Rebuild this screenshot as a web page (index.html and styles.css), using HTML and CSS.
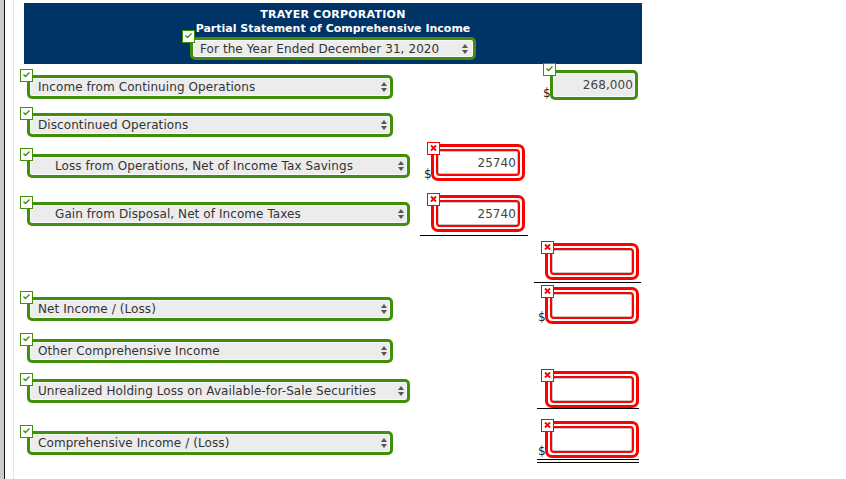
FILE: index.html
```html
<!DOCTYPE html>
<html>
<head>
<meta charset="utf-8">
<link rel="stylesheet" href="styles.css">
</head>
<body>
<div class="page">
  <div class="gutter"></div>
  <div class="main">
    <div class="rule">
      <div class="head">
        <div class="title">TRAYER CORPORATION</div>
        <div class="title">Partial Statement of Comprehensive Income</div>
        <div class="sel sel-head">
          <span class="ok"><svg viewBox="0 0 13 13"><path d="M3.5 5.5L5.5 7.5L9.5 3.5" fill="none" stroke="#3f8f0a" stroke-width="1.4"/></svg></span>
          <span class="txt">For the Year Ended December 31, 2020</span>
          <svg class="arr" viewBox="0 0 6 10"><path d="M0 4L3 0L6 4Z M0 6L3 10L6 6Z" fill="#555"/></svg>
        </div>
      </div>

      <div class="row ra">
        <div class="lab pt11">
          <div class="sel sel-n">
            <span class="ok"><svg viewBox="0 0 13 13"><path d="M3.5 5.5L5.5 7.5L9.5 3.5" fill="none" stroke="#3f8f0a" stroke-width="1.4"/></svg></span>
            <span class="txt">Income from Continuing Operations</span>
            <svg class="arr" viewBox="0 0 6 10"><path d="M0 4L3 0L6 4Z M0 6L3 10L6 6Z" fill="#555"/></svg>
          </div>
        </div>
        <div class="cell"></div>
        <div class="cell pt6 shift">
          <div class="grp">
            <span class="dollar">$</span>
            <div class="inp-g">
              <span class="ok"><svg viewBox="0 0 13 13"><path d="M3.5 5.5L5.5 7.5L9.5 3.5" fill="none" stroke="#3f8f0a" stroke-width="1.4"/></svg></span>
              268,000
            </div>
          </div>
        </div>
      </div>

      <div class="row rb">
        <div class="lab pt9">
          <div class="sel sel-n">
            <span class="ok"><svg viewBox="0 0 13 13"><path d="M3.5 5.5L5.5 7.5L9.5 3.5" fill="none" stroke="#3f8f0a" stroke-width="1.4"/></svg></span>
            <span class="txt">Discontinued Operations</span>
            <svg class="arr" viewBox="0 0 6 10"><path d="M0 4L3 0L6 4Z M0 6L3 10L6 6Z" fill="#555"/></svg>
          </div>
        </div>
        <div class="cell"></div>
        <div class="cell"></div>
      </div>

      <div class="row rc">
        <div class="lab pt14">
          <div class="sel sel-w indent">
            <span class="ok"><svg viewBox="0 0 13 13"><path d="M3.5 5.5L5.5 7.5L9.5 3.5" fill="none" stroke="#3f8f0a" stroke-width="1.4"/></svg></span>
            <span class="txt">Loss from Operations, Net of Income Tax Savings</span>
            <svg class="arr" viewBox="0 0 6 10"><path d="M0 4L3 0L6 4Z M0 6L3 10L6 6Z" fill="#555"/></svg>
          </div>
        </div>
        <div class="cell pt4">
          <div class="grp">
            <span class="dollar">$</span>
            <div class="inp-r">
              <span class="bad"><svg viewBox="0 0 13 13"><path d="M4 3.5L9 8.5M9 3.5L4 8.5" fill="none" stroke="#f00" stroke-width="1.8"/></svg></span>
              <div class="in">25740</div>
            </div>
          </div>
        </div>
        <div class="cell"></div>
      </div>

      <div class="row rd">
        <div class="lab pt16">
          <div class="sel sel-w indent">
            <span class="ok"><svg viewBox="0 0 13 13"><path d="M3.5 5.5L5.5 7.5L9.5 3.5" fill="none" stroke="#3f8f0a" stroke-width="1.4"/></svg></span>
            <span class="txt">Gain from Disposal, Net of Income Taxes</span>
            <svg class="arr" viewBox="0 0 6 10"><path d="M0 4L3 0L6 4Z M0 6L3 10L6 6Z" fill="#555"/></svg>
          </div>
        </div>
        <div class="cell pt9 under">
          <div class="grp">
            <span class="dollar"></span>
            <div class="inp-r">
              <span class="bad"><svg viewBox="0 0 13 13"><path d="M4 3.5L9 8.5M9 3.5L4 8.5" fill="none" stroke="#f00" stroke-width="1.8"/></svg></span>
              <div class="in">25740</div>
            </div>
          </div>
        </div>
        <div class="cell"></div>
      </div>

      <div class="row re">
        <div class="lab"></div>
        <div class="cell"></div>
        <div class="cell pt7 under">
          <div class="grp">
            <span class="dollar"></span>
            <div class="inp-r">
              <span class="bad"><svg viewBox="0 0 13 13"><path d="M4 3.5L9 8.5M9 3.5L4 8.5" fill="none" stroke="#f00" stroke-width="1.8"/></svg></span>
              <div class="in"></div>
            </div>
          </div>
        </div>
      </div>

      <div class="row rf">
        <div class="lab pt14">
          <div class="sel sel-n">
            <span class="ok"><svg viewBox="0 0 13 13"><path d="M3.5 5.5L5.5 7.5L9.5 3.5" fill="none" stroke="#3f8f0a" stroke-width="1.4"/></svg></span>
            <span class="txt">Net Income / (Loss)</span>
            <svg class="arr" viewBox="0 0 6 10"><path d="M0 4L3 0L6 4Z M0 6L3 10L6 6Z" fill="#555"/></svg>
          </div>
        </div>
        <div class="cell"></div>
        <div class="cell pt4">
          <div class="grp">
            <span class="dollar">$</span>
            <div class="inp-r">
              <span class="bad"><svg viewBox="0 0 13 13"><path d="M4 3.5L9 8.5M9 3.5L4 8.5" fill="none" stroke="#f00" stroke-width="1.8"/></svg></span>
              <div class="in"></div>
            </div>
          </div>
        </div>
      </div>

      <div class="row rg">
        <div class="lab pt12">
          <div class="sel sel-n">
            <span class="ok"><svg viewBox="0 0 13 13"><path d="M3.5 5.5L5.5 7.5L9.5 3.5" fill="none" stroke="#3f8f0a" stroke-width="1.4"/></svg></span>
            <span class="txt">Other Comprehensive Income</span>
            <svg class="arr" viewBox="0 0 6 10"><path d="M0 4L3 0L6 4Z M0 6L3 10L6 6Z" fill="#555"/></svg>
          </div>
        </div>
        <div class="cell"></div>
        <div class="cell"></div>
      </div>

      <div class="row rh">
        <div class="lab pt13">
          <div class="sel sel-w">
            <span class="ok"><svg viewBox="0 0 13 13"><path d="M3.5 5.5L5.5 7.5L9.5 3.5" fill="none" stroke="#3f8f0a" stroke-width="1.4"/></svg></span>
            <span class="txt">Unrealized Holding Loss on Available-for-Sale Securities</span>
            <svg class="arr" viewBox="0 0 6 10"><path d="M0 4L3 0L6 4Z M0 6L3 10L6 6Z" fill="#555"/></svg>
          </div>
        </div>
        <div class="cell"></div>
        <div class="cell pt5 under inset">
          <div class="grp">
            <span class="dollar"></span>
            <div class="inp-r">
              <span class="bad"><svg viewBox="0 0 13 13"><path d="M4 3.5L9 8.5M9 3.5L4 8.5" fill="none" stroke="#f00" stroke-width="1.8"/></svg></span>
              <div class="in"></div>
            </div>
          </div>
        </div>
      </div>

      <div class="row ri">
        <div class="lab pt22">
          <div class="sel sel-n">
            <span class="ok"><svg viewBox="0 0 13 13"><path d="M3.5 5.5L5.5 7.5L9.5 3.5" fill="none" stroke="#3f8f0a" stroke-width="1.4"/></svg></span>
            <span class="txt">Comprehensive Income / (Loss)</span>
            <svg class="arr" viewBox="0 0 6 10"><path d="M0 4L3 0L6 4Z M0 6L3 10L6 6Z" fill="#555"/></svg>
          </div>
        </div>
        <div class="cell"></div>
        <div class="cell pt12 double inset">
          <div class="grp">
            <span class="dollar">$</span>
            <div class="inp-r">
              <span class="bad"><svg viewBox="0 0 13 13"><path d="M4 3.5L9 8.5M9 3.5L4 8.5" fill="none" stroke="#f00" stroke-width="1.8"/></svg></span>
              <div class="in"></div>
            </div>
          </div>
        </div>
      </div>
    </div>
  </div>
</div>
</body>
</html>
```

FILE: styles.css
```css
* { box-sizing: border-box; }
body {
  margin: 0;
  background: #fff;
  font-family: "DejaVu Sans", Verdana, sans-serif;
}
.page { display: flex; min-height: 479px; }
.gutter {
  width: 5px;
  background: #cbcbcb;
  border-right: 1px solid #111;
}
.main { flex: 1; padding-left: 8px; }
.rule {
  min-height: 479px;
  border-left: 1px solid #dfe8f1;
  padding-left: 10px;
  padding-top: 3px;
}

.head {
  width: 618px;
  height: 61px;
  background: #003366;
  color: #fff;
  padding-top: 5px;
  display: flex;
  flex-direction: column;
  align-items: center;
}
.title {
  font-weight: bold;
  font-size: 11px;
  line-height: 14px;
  white-space: nowrap;
}
.title:first-child { letter-spacing: 0.25px; }

.sel {
  position: relative;
  display: flex;
  align-items: center;
  height: 24px;
  border: 3px solid #3f8f0a;
  border-radius: 5px;
  background: #ececec;
  box-shadow: inset 0 0 0 1px #fafafa;
  color: #333;
  font-size: 12px;
  letter-spacing: 0.08px;
  padding: 0 3px 0 8px;
}
.sel .txt { flex: 1; white-space: nowrap; }
.sel .arr { width: 6px; height: 10px; flex: none; }
.sel-head { width: 286px; height: 23px; margin-top: 1px; padding-left: 7px; padding-right: 5px; }
.sel-n { width: 366px; margin-left: 3px; }
.sel-w { width: 383px; margin-left: 3px; }
.indent .txt { padding-left: 17px; }

.ok, .bad {
  position: absolute;
  width: 13px;
  height: 13px;
  background: #fff;
  z-index: 2;
}
.ok { border: 1px solid #3f8f0a; }
.bad { border: 1px solid #f00; }
.ok svg, .bad svg {
  position: absolute;
  left: -1px;
  top: -1px;
  width: 13px;
  height: 13px;
}
.sel .ok { left: -10px; top: -9px; }
.sel-head .ok { left: -11px; top: -10px; }

.row {
  display: grid;
  grid-template-columns: 390px 108px 107px;
  column-gap: 6px;
}
.ra { height: 40px; }
.rb { height: 36px; }
.rc { height: 46px; }
.rd { height: 50px; }
.re { height: 47px; }
.rf { height: 44px; }
.rg { height: 39px; }
.rh { height: 43px; }
.ri { height: 54px; }

.pt4 { padding-top: 4px; }
.pt5 { padding-top: 5px; }
.pt6 { padding-top: 6px; }
.pt7 { padding-top: 7px; }
.pt9 { padding-top: 9px; }
.pt11 { padding-top: 11px; }
.pt12 { padding-top: 12px; }
.pt13 { padding-top: 13px; }
.pt14 { padding-top: 14px; }
.pt16 { padding-top: 16px; }
.pt22 { padding-top: 22px; }

.cell { padding-left: 4px; }
.cell.shift { padding-left: 9px; }
.cell.inset { margin-left: 3px; margin-right: 2px; padding-left: 1px; }
.under { border-bottom: 1px solid #000; }
.double { border-bottom: 4px double #000; }

.grp { display: flex; align-items: flex-end; }
.dollar {
  width: 7px;
  flex: none;
  font-size: 12px;
  line-height: 12px;
  color: #222;
  margin-bottom: 1px;
}

.inp-g {
  position: relative;
  width: 88px;
  height: 30px;
  border: 3px solid #3f8f0a;
  border-radius: 5px;
  background: #ececec;
  box-shadow: inset 0 0 0 1px #fafafa;
  text-align: right;
  font-size: 12px;
  letter-spacing: 0.08px;
  line-height: 24px;
  padding-right: 2px;
  color: #444;
}
.inp-g .ok { left: -10px; top: -10px; }

.inp-r {
  position: relative;
  width: 94px;
  height: 37px;
  border: 3px solid #f00;
  border-radius: 7px;
  padding: 2px;
  background: #fff;
}
.inp-r .in {
  height: 100%;
  border: 2px solid #f00;
  border-radius: 4px;
  box-shadow: inset 0 0 0 1px #c8c8c8;
  display: flex;
  align-items: center;
  justify-content: flex-end;
  padding-right: 2px;
  font-size: 12px;
  letter-spacing: 0.08px;
  color: #444;
}
.inp-r .bad { left: -7px; top: -5px; }
```
